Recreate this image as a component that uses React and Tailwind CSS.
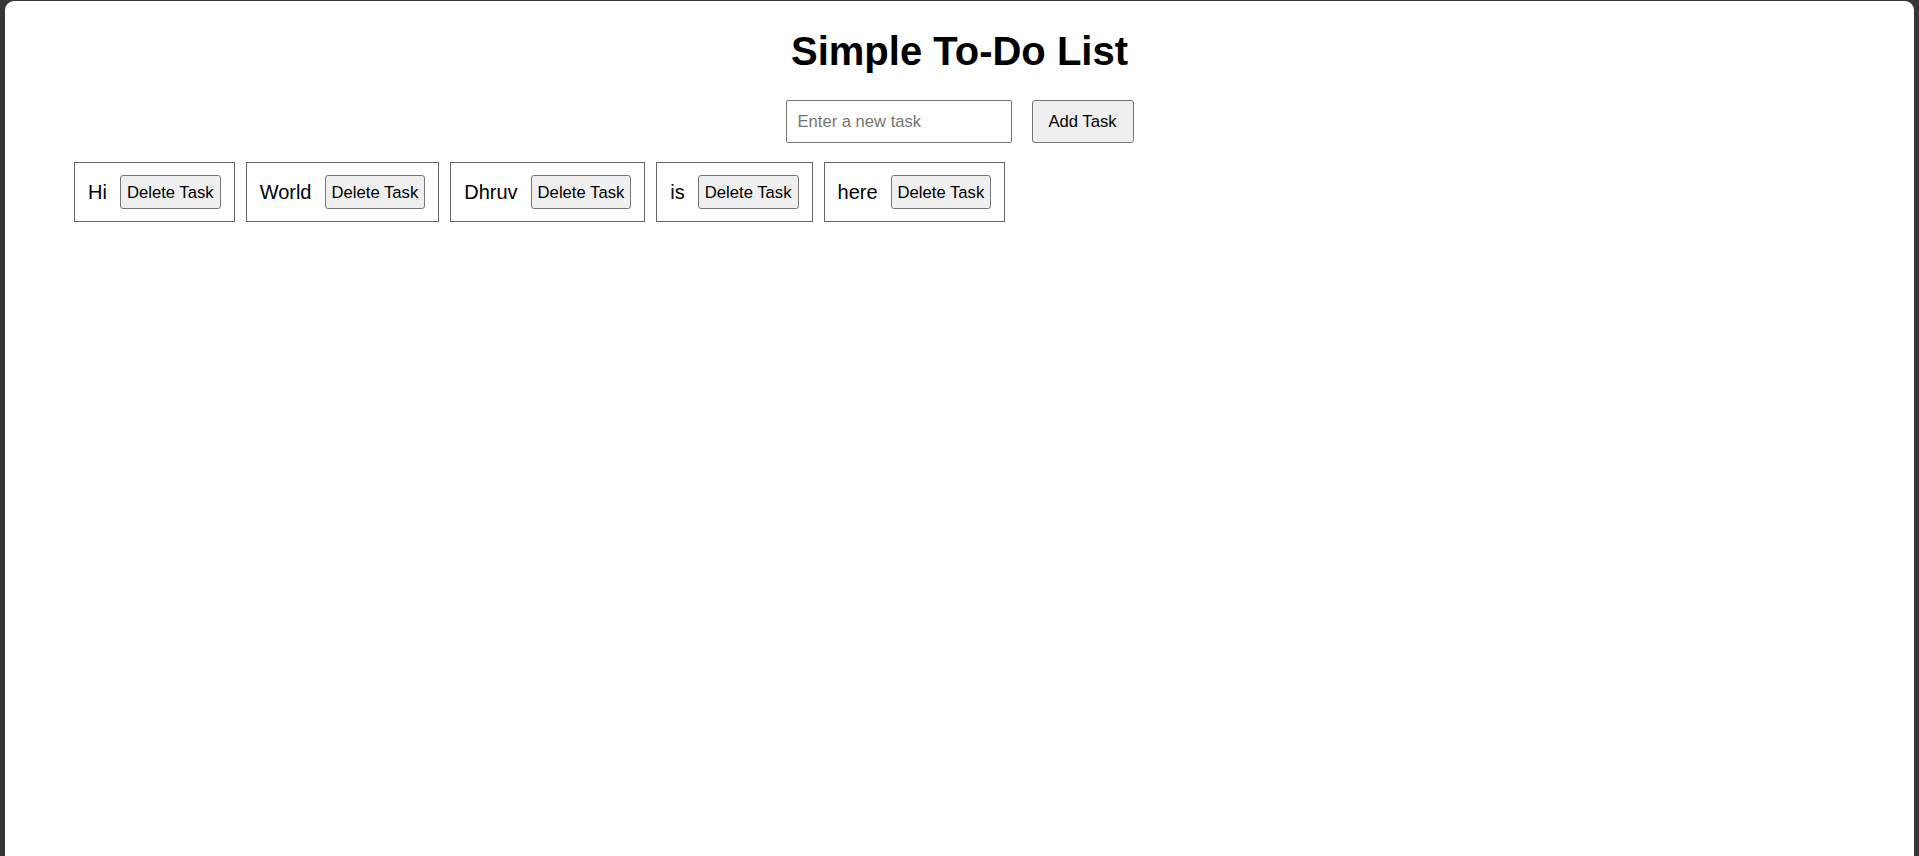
import { useState } from "react";

const initialTasks = ["Hi", "World", "Dhruv", "is", "here"];

export default function App() {
  const [tasks, setTasks] = useState(initialTasks);
  const [newTask, setNewTask] = useState("");

  function addTask() {
    if (newTask.trim() === "") return;
    setTasks([...tasks, newTask.trim()]);
    setNewTask("");
  }

  function deleteTask(index) {
    setTasks(tasks.filter((_, i) => i !== index));
  }

  return (
    <div
      className="h-screen overflow-hidden bg-[#363636] pt-px px-[5px]"
      style={{ fontFamily: '"Liberation Sans", Arial, sans-serif' }}
    >
      <div className="h-full bg-white rounded-t-[9px] text-black">
        <h1 className="pt-[27px] text-center text-[40px] leading-[46px] font-bold">
          Simple To-Do List
        </h1>

        <div className="mt-[26px] flex justify-center gap-[20px]">
          <input
            type="text"
            value={newTask}
            onChange={(e) => setNewTask(e.target.value)}
            placeholder="Enter a new task"
            className="w-[226px] h-[43px] px-[11px] text-[16.6px] border border-[#767676] rounded-[2px] placeholder:text-[#757575] outline-none"
          />
          <button
            onClick={addTask}
            className="w-[102px] h-[43px] text-[16.67px] bg-[#efefef] border border-[#767676] rounded-[3px]"
          >
            Add Task
          </button>
        </div>

        <ul className="mt-[19px] ml-[69px] flex gap-[11px]">
          {tasks.map((task, index) => (
            <li
              key={index}
              className="h-[60px] flex items-center px-[13px] border border-[#666666] text-[20px]"
            >
              <span className="-mt-px">{task}</span>
              <button
                onClick={() => deleteTask(index)}
                className="ml-[13px] h-[34px] px-[6px] text-[16.67px] bg-[#efefef] border border-[#767676] rounded-[3px]"
              >
                Delete Task
              </button>
            </li>
          ))}
        </ul>
      </div>
    </div>
  );
}
